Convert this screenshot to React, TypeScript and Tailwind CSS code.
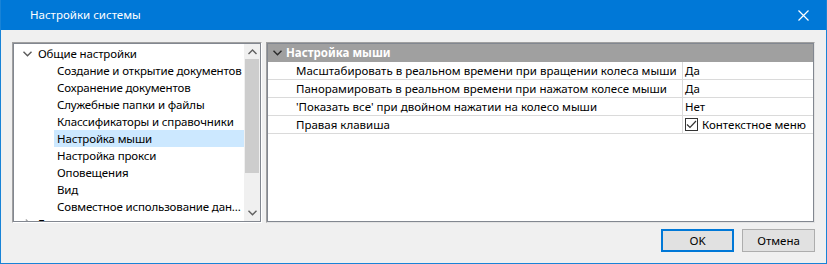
const font = { fontFamily: '"Noto Sans", "Open Sans", sans-serif' };

const treeItems = [
  'Создание и открытие документов',
  'Сохранение документов',
  'Служебные папки и файлы',
  'Классификаторы и справочники',
  'Настройка мыши',
  'Настройка прокси',
  'Оповещения',
  'Вид',
  'Совместное использование дан...',
];

const rows = [
  { name: 'Масштабировать в реальном времени при вращении колеса мыши', value: 'Да' },
  { name: 'Панорамировать в реальном времени при нажатом колесе мыши', value: 'Да' },
  { name: "'Показать все' при двойном нажатии на колесо мыши", value: 'Нет' },
  { name: 'Правая клавиша', value: 'check' },
];

const ChevronDown = ({ color = '#5a5a5a' }: { color?: string }) => (
  <svg width="9" height="6" viewBox="0 0 9 6">
    <path d="M0.5 0.8 L4.5 4.8 L8.5 0.8" fill="none" stroke={color} strokeWidth="1.4" />
  </svg>
);

const App = () => {
  return (
    <div
      className="w-[827px] h-[264px] flex flex-col border-x border-b border-[#1883d7] bg-[#f0f0f0] text-[11.5px] text-black overflow-hidden"
      style={font}
    >
      {/* title bar */}
      <div className="h-[30px] bg-[#0078d7] flex items-center justify-between pl-[29px] pr-[17px] text-white shrink-0">
        <span>Настройки системы</span>
        <svg width="11" height="11" viewBox="0 0 11 11">
          <path d="M0.5 0.5 L10.5 10.5 M10.5 0.5 L0.5 10.5" stroke="#fff" strokeWidth="1.2" />
        </svg>
      </div>

      <div className="flex gap-[4px] pl-[11px] pt-[12px]">
        {/* tree */}
        <div className="w-[250px] h-[181px] border border-[#a0a0a0] border-b-white border-r-white">
          <div className="h-full border border-[#828790] bg-white flex overflow-hidden">
            <div className="flex-1 overflow-hidden pt-[1px] tracking-[-0.15px]">
              <div className="h-[17px] flex items-center">
                <span className="w-[24px] flex justify-end pr-[6px]"><ChevronDown /></span>
                <span>Общие настройки</span>
              </div>
              {treeItems.map((t, i) => (
                <div key={t} className="h-[17px] flex items-center pl-[40px]">
                  <div className={`h-full flex items-center pl-[3px] flex-1 whitespace-nowrap overflow-hidden ${i === 4 ? 'bg-[#cce8ff]' : ''}`}>
                    {t}
                  </div>
                </div>
              ))}
              <div className="h-[17px] flex items-center">
                <span className="w-[24px] flex justify-end pr-[7px]">
                  <svg width="6" height="9" viewBox="0 0 6 9">
                    <path d="M0.8 0.5 L4.8 4.5 L0.8 8.5" fill="none" stroke="#a6a6a6" strokeWidth="1.3" />
                  </svg>
                </span>
                <span>Б</span>
              </div>
            </div>
            {/* scrollbar */}
            <div className="w-[16px] bg-[#f0f0f0] flex flex-col items-center">
              <div className="h-[15px] flex items-center justify-center">
                <svg width="9" height="6" viewBox="0 0 9 6">
                  <path d="M0.5 5 L4.5 1 L8.5 5" fill="none" stroke="#606060" strokeWidth="1.4" />
                </svg>
              </div>
              <div className="w-[14px] h-[114px] bg-[#cdcdcd]" />
              <div className="flex-1" />
              <div className="h-[17px] flex items-center justify-center">
                <ChevronDown color="#606060" />
              </div>
            </div>
          </div>
        </div>

        {/* property grid */}
        <div className="w-[549px] h-[181px] border border-[#a0a0a0] border-b-[#e3e3e3] border-r-[#e3e3e3]">
          <div className="h-full border border-[#828790] bg-white">
            <div className="h-[18px] bg-[#a0a0a0] flex items-center text-white font-bold">
              <span className="w-[16px] flex justify-end pr-[2px]"><ChevronDown color="#2b2b2b" /></span>
              <span className="pl-[2px]">Настройка мыши</span>
            </div>
            {rows.map((r) => (
              <div key={r.name} className="h-[18px] flex border-b border-[#dadada]">
                <div className="w-[415px] pl-[28px] flex items-center border-r border-[#dadada] whitespace-nowrap overflow-hidden">
                  {r.name}
                </div>
                <div className="flex-1 pl-[2px] flex items-center">
                  {r.value === 'check' ? (
                    <span className="flex items-center gap-[4px]">
                      <span className="w-[13px] h-[13px] border border-[#333] flex items-center justify-center">
                        <svg width="11" height="9" viewBox="0 0 11 9">
                          <path d="M1 4.5 L4 7.5 L10 1" fill="none" stroke="#333" strokeWidth="1.2" />
                        </svg>
                      </span>
                      Контекстное меню
                    </span>
                  ) : (
                    r.value
                  )}
                </div>
              </div>
            ))}
          </div>
        </div>
      </div>

      {/* buttons */}
      <div className="flex justify-end gap-[8px] pr-[11px] pt-[6px]">
        <button className="w-[73px] h-[23px] border-2 border-[#0078d7] bg-[#e1e1e1] flex items-center justify-center">
          OK
        </button>
        <button className="w-[73px] h-[23px] border border-[#adadad] bg-[#e1e1e1] flex items-center justify-center">
          Отмена
        </button>
      </div>
    </div>
  );
};

export default App;
